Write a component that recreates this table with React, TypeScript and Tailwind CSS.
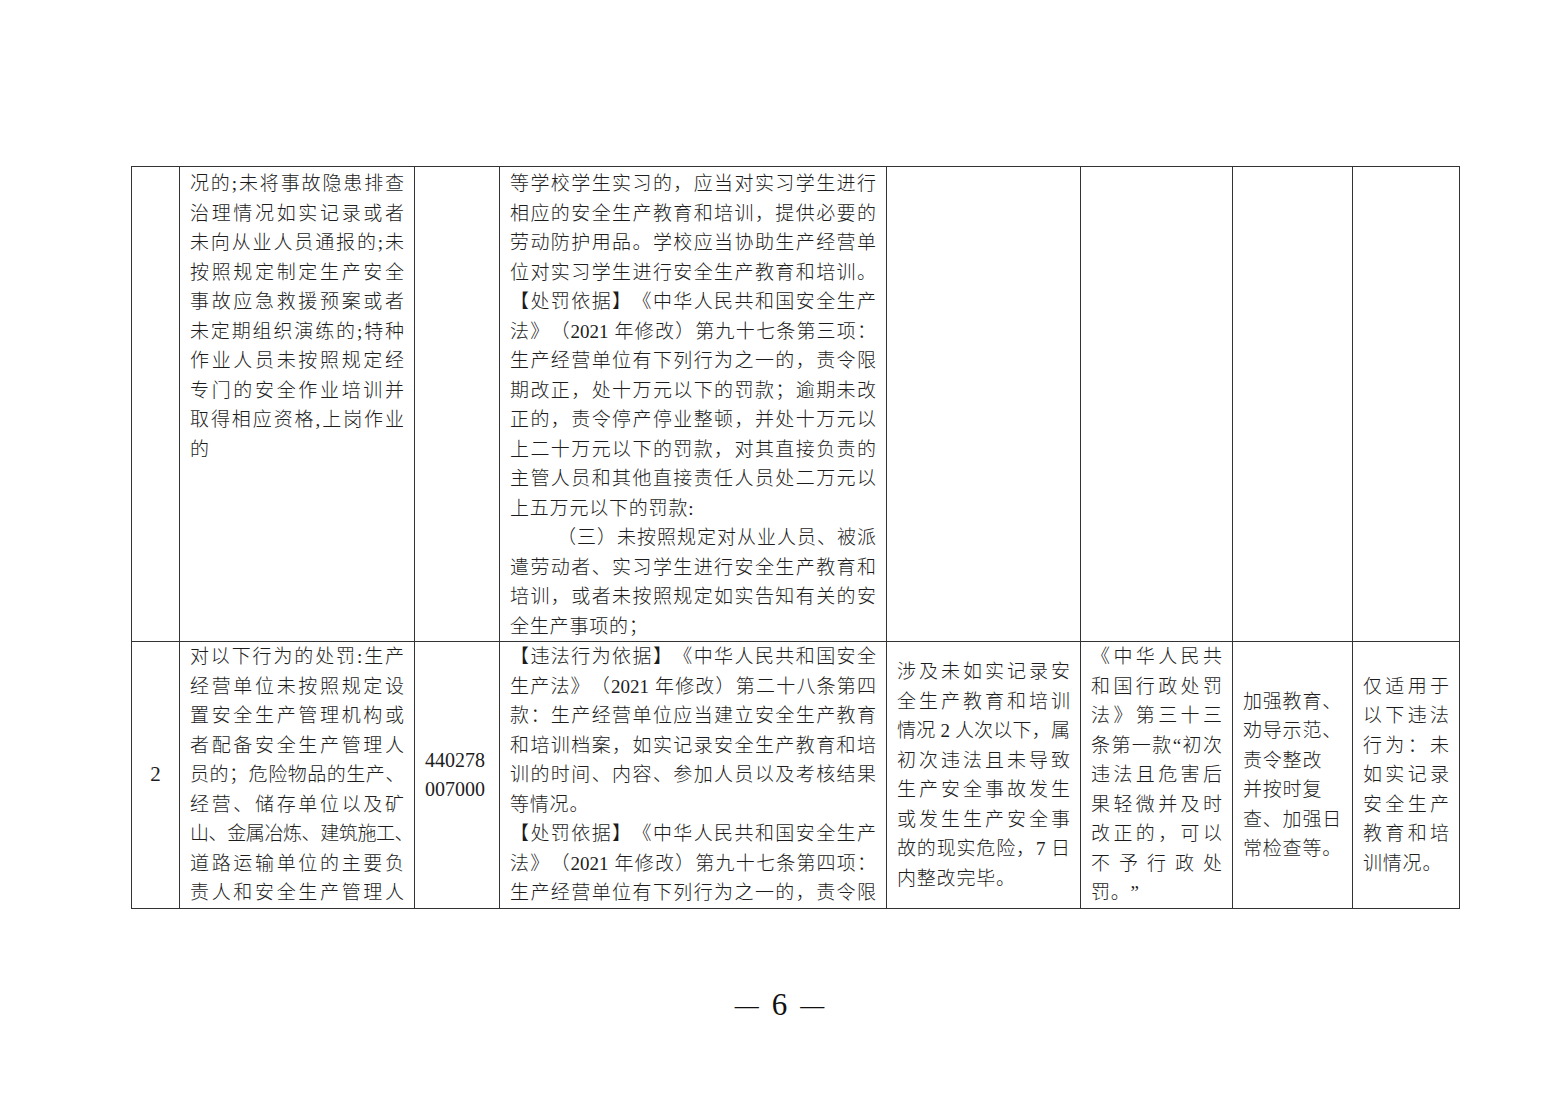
import React from "react";

type Line = { t: string; kind?: "j" | "end" | "indent" | "tight" };

const j = (t: string): Line => ({ t, kind: "j" });
const end = (t: string): Line => ({ t, kind: "end" });

const row1Item: Line[] = [
  j("况的;未将事故隐患排查"),
  j("治理情况如实记录或者"),
  j("未向从业人员通报的;未"),
  j("按照规定制定生产安全"),
  j("事故应急救援预案或者"),
  j("未定期组织演练的;特种"),
  j("作业人员未按照规定经"),
  j("专门的安全作业培训并"),
  j("取得相应资格,上岗作业"),
  end("的"),
];

const row1Basis: Line[] = [
  j("等学校学生实习的，应当对实习学生进行"),
  j("相应的安全生产教育和培训，提供必要的"),
  j("劳动防护用品。学校应当协助生产经营单"),
  j("位对实习学生进行安全生产教育和培训。"),
  j("【处罚依据】《中华人民共和国安全生产"),
  j("法》（2021 年修改）第九十七条第三项："),
  j("生产经营单位有下列行为之一的，责令限"),
  j("期改正，处十万元以下的罚款；逾期未改"),
  j("正的，责令停产停业整顿，并处十万元以"),
  j("上二十万元以下的罚款，对其直接负责的"),
  j("主管人员和其他直接责任人员处二万元以"),
  end("上五万元以下的罚款:"),
  { t: "（三）未按照规定对从业人员、被派", kind: "indent" },
  j("遣劳动者、实习学生进行安全生产教育和"),
  j("培训，或者未按照规定如实告知有关的安"),
  end("全生产事项的；"),
];

const row2Item: Line[] = [
  j("对以下行为的处罚:生产"),
  j("经营单位未按照规定设"),
  j("置安全生产管理机构或"),
  j("者配备安全生产管理人"),
  { t: "员的；危险物品的生产、", kind: "tight" },
  j("经营、储存单位以及矿"),
  { t: "山、金属冶炼、建筑施工、", kind: "tight" },
  j("道路运输单位的主要负"),
  j("责人和安全生产管理人"),
];

const row2Basis: Line[] = [
  j("【违法行为依据】《中华人民共和国安全"),
  j("生产法》（2021 年修改）第二十八条第四"),
  j("款：生产经营单位应当建立安全生产教育"),
  j("和培训档案，如实记录安全生产教育和培"),
  j("训的时间、内容、参加人员以及考核结果"),
  end("等情况。"),
  j("【处罚依据】《中华人民共和国安全生产"),
  j("法》（2021 年修改）第九十七条第四项："),
  j("生产经营单位有下列行为之一的，责令限"),
];

const row2Case: Line[] = [
  j("涉及未如实记录安"),
  j("全生产教育和培训"),
  j("情况 2 人次以下，属"),
  j("初次违法且未导致"),
  j("生产安全事故发生"),
  j("或发生生产安全事"),
  j("故的现实危险，7 日"),
  end("内整改完毕。"),
];

const row2Law: Line[] = [
  j("《中华人民共"),
  j("和国行政处罚"),
  j("法》第三十三"),
  j("条第一款“初次"),
  j("违法且危害后"),
  j("果轻微并及时"),
  j("改正的，可以"),
  j("不予行政处"),
  end("罚。”"),
];

const row2Measure: Line[] = [
  end("加强教育、"),
  end("劝导示范、"),
  end("责令整改"),
  end("并按时复"),
  end("查、加强日"),
  end("常检查等。"),
];

const row2Scope: Line[] = [
  j("仅适用于"),
  j("以下违法"),
  j("行为：未"),
  j("如实记录"),
  j("安全生产"),
  j("教育和培"),
  end("训情况。"),
];

function Lines({ lines }: { lines: Line[] }) {
  return (
    <>
      {lines.map((l, i) => {
        if (l.kind === "end") {
          return (
            <div key={i} className="whitespace-nowrap tracking-[0.8px]">
              {l.t}
            </div>
          );
        }
        if (l.kind === "indent") {
          return (
            <div key={i} className="pl-[47px] text-justify [text-align-last:justify]">
              {l.t}
            </div>
          );
        }
        if (l.kind === "tight") {
          return (
            <div key={i} className="whitespace-nowrap text-justify [text-align-last:justify] tracking-[-0.4px]">
              {l.t}
            </div>
          );
        }
        return (
          <div key={i} className="text-justify [text-align-last:justify]">
            {l.t}
          </div>
        );
      })}
    </>
  );
}

const td = "border-[1.5px] border-[#333] px-[10px] py-0";

export default function App() {
  return (
    <div className="min-h-[1102px] w-[1559px] bg-white pt-[166px] font-['Liberation_Serif','Noto_Sans_CJK_SC',serif] text-[19px] font-light leading-[29.5px] text-[#1c1c1c] [text-spacing-trim:space-all]">
      <table className="ml-[131px] w-[1328px] table-fixed border-collapse">
        <colgroup>
          <col className="w-[48px]" />
          <col className="w-[235px]" />
          <col className="w-[85px]" />
          <col className="w-[387px]" />
          <col className="w-[194px]" />
          <col className="w-[152px]" />
          <col className="w-[120px]" />
          <col className="w-[107px]" />
        </colgroup>
        <tbody>
          <tr className="h-[475px]">
            <td className={td}></td>
            <td className={`${td} align-top pt-[2px]`}>
              <Lines lines={row1Item} />
            </td>
            <td className={td}></td>
            <td className={`${td} align-top pt-[2px]`}>
              <Lines lines={row1Basis} />
            </td>
            <td className={td}></td>
            <td className={td}></td>
            <td className={td}></td>
            <td className={td}></td>
          </tr>
          <tr className="h-[267px]">
            <td className={`${td} px-0 text-center align-middle text-[21px]`}>2</td>
            <td className={`${td} align-middle`}>
              <Lines lines={row2Item} />
            </td>
            <td className={`${td} align-middle text-[20px]`}>
              <div>440278</div>
              <div>007000</div>
            </td>
            <td className={`${td} align-middle`}>
              <Lines lines={row2Basis} />
            </td>
            <td className={`${td} align-middle`}>
              <Lines lines={row2Case} />
            </td>
            <td className={`${td} align-middle`}>
              <Lines lines={row2Law} />
            </td>
            <td className={`${td} align-middle`}>
              <Lines lines={row2Measure} />
            </td>
            <td className={`${td} align-middle`}>
              <Lines lines={row2Scope} />
            </td>
          </tr>
        </tbody>
      </table>

      <div className="mt-[76px] flex items-center justify-center gap-[13px] leading-[40px] text-[#111]">
        <span className="text-[24px]">—</span>
        <span className="text-[31px]">6</span>
        <span className="text-[24px]">—</span>
      </div>
    </div>
  );
}
